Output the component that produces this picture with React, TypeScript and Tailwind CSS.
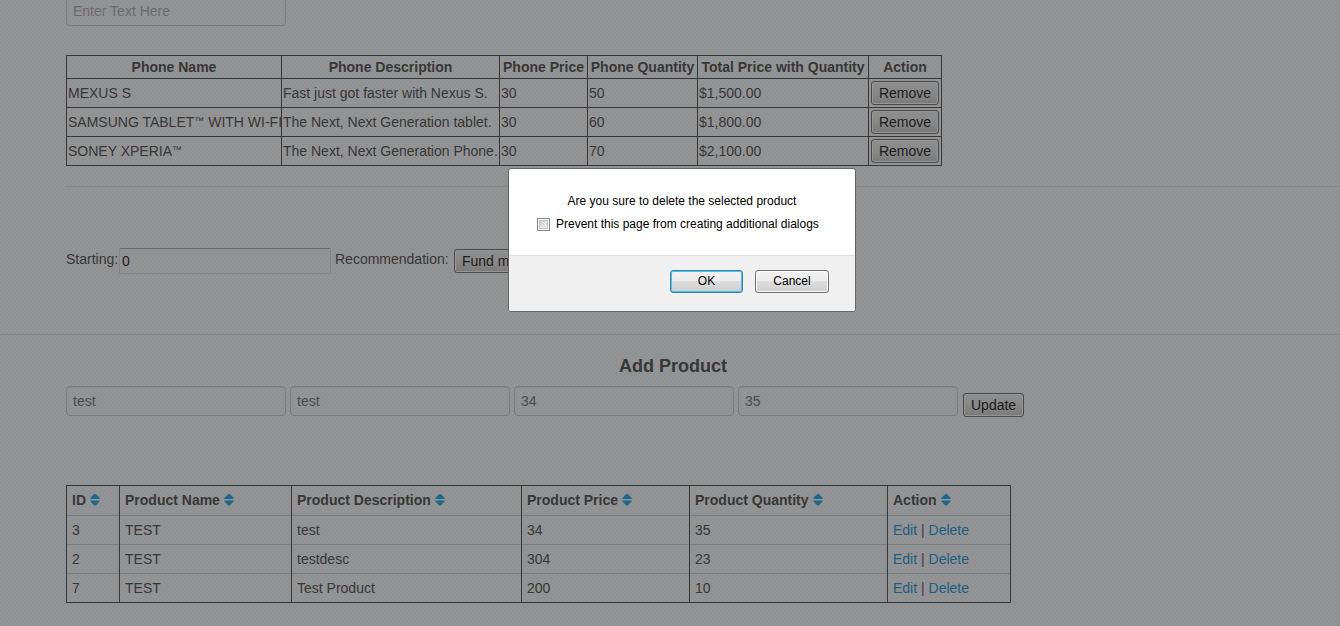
import { ReactNode } from "react";

const phones = [
  { name: "MEXUS S", description: "Fast just got faster with Nexus S.", price: 30, quantity: 50, total: "$1,500.00" },
  { name: "SAMSUNG TABLET™ WITH WI-FI", description: "The Next, Next Generation tablet.", price: 30, quantity: 60, total: "$1,800.00" },
  { name: "SONEY XPERIA™", description: "The Next, Next Generation Phone.", price: 30, quantity: 70, total: "$2,100.00" },
];

const products = [
  { id: 3, name: "TEST", description: "test", price: 34, quantity: 35 },
  { id: 2, name: "TEST", description: "testdesc", price: 304, quantity: 23 },
  { id: 7, name: "TEST", description: "Test Product", price: 200, quantity: 10 },
];

const phoneColumns = [
  { label: "Phone Name", width: "w-[215px]" },
  { label: "Phone Description", width: "w-[218px]" },
  { label: "Phone Price", width: "w-[88px]" },
  { label: "Phone Quantity", width: "w-[110px]" },
  { label: "Total Price with Quantity", width: "w-[171px]" },
  { label: "Action", width: "w-[73px]" },
];

const productColumns = [
  { label: "ID", width: "w-[53px]" },
  { label: "Product Name", width: "w-[172px]" },
  { label: "Product Description", width: "w-[230px]" },
  { label: "Product Price", width: "w-[168px]" },
  { label: "Product Quantity", width: "w-[198px]" },
  { label: "Action", width: "w-[123px]" },
];

function SortIcon() {
  return (
    <svg viewBox="0 0 10 12" className="ml-1 inline-block h-3 w-[10px] align-[-1px] fill-[#1d688c]" aria-hidden="true">
      <path d="M4.2 0h1.6L9.6 4v1H0.4V4Z M0.4 6.5h9.2v1L5.8 11.5H4.2L0.4 7.5Z" />
    </svg>
  );
}

function PhoneName({ name }: { name: string }) {
  const [before, after] = name.split("™");
  if (after === undefined) return <>{name}</>;
  return (
    <>
      {before}
      <span className="align-[3px] text-[10px] leading-none">™</span>
      {after}
    </>
  );
}

function PageButton({ children }: { children: ReactNode }) {
  return (
    <button
      type="button"
      className="h-6 rounded-[3px] border border-[#4a4a4a] bg-linear-to-b from-[#8e8e8e] via-[#888888] to-[#7a7a7a] px-[7px] text-sm leading-5 whitespace-nowrap text-[#1c1c1c] shadow-[inset_0_0_0_1px_#959595]"
    >
      {children}
    </button>
  );
}

const fieldClass =
  "h-[30px] w-[220px] rounded border border-[#7a7b7c] bg-transparent px-[6px] text-sm text-[#4a4b4b] placeholder:text-[#6a6b6b] shadow-[inset_0_1px_1px_rgba(0,0,0,0.05)]";

export default function App() {
  return (
    <div className="relative min-h-screen overflow-hidden bg-[#929393] bg-[repeating-conic-gradient(#8f9192_0_25%,#949494_0_50%)] bg-size-[4px_4px] font-['Liberation_Sans',Arial,sans-serif] text-sm leading-5 text-[#373737]">
      <div className="-mt-1 pl-[66px]">
        <input aria-label="Search phones" placeholder="Enter Text Here" className={`${fieldClass} block`} />
        <table className="mt-[29px] w-[876px] table-fixed border-collapse border border-[#373737]">
          <thead>
            <tr className="h-[23px]">
              {phoneColumns.map((column) => (
                <th key={column.label} className={`${column.width} border border-[#373737] p-px text-center font-bold whitespace-nowrap`}>
                  {column.label}
                </th>
              ))}
            </tr>
          </thead>
          <tbody>
            {phones.map((phone) => (
              <tr key={phone.name} className="h-[29px]">
                <td className="border border-[#373737] p-px whitespace-nowrap">
                  <PhoneName name={phone.name} />
                </td>
                <td className="border border-[#373737] p-px whitespace-nowrap">{phone.description}</td>
                <td className="border border-[#373737] p-px">{phone.price}</td>
                <td className="border border-[#373737] p-px">{phone.quantity}</td>
                <td className="border border-[#373737] p-px">{phone.total}</td>
                <td className="border border-[#373737] p-px">
                  <div className="flex justify-center">
                    <PageButton>Remove</PageButton>
                  </div>
                </td>
              </tr>
            ))}
          </tbody>
        </table>
        <hr className="mt-5 border-t border-[#878787]" />
        <div className="mt-[61px] flex items-start">
          <label htmlFor="starting" className="mt-px w-[53px]">Starting:</label>
          <input
            id="starting"
            defaultValue="0"
            className="h-[26px] w-[212px] rounded-[2px] border border-[#828384] border-t-[#696a6a] bg-transparent px-[2px] text-sm text-[#1c1c1c]"
          />
          <span className="mt-px ml-1 w-[119px]">Recommendation:</span>
          <div className="mt-px">
            <PageButton>Fund my purchase</PageButton>
          </div>
        </div>
      </div>

      <hr className="mt-[60px] border-t border-[#838383]" />

      <section className="pr-[60px] pl-[66px]">
        <h2 className="mt-[19px] text-center text-lg leading-6 font-bold">Add Product</h2>
        <form className="mt-2 flex items-start gap-1">
          <input aria-label="Product name" defaultValue="test" className={fieldClass} />
          <input aria-label="Product description" defaultValue="test" className={fieldClass} />
          <input aria-label="Product price" defaultValue="34" className={fieldClass} />
          <input aria-label="Product quantity" defaultValue="35" className={fieldClass} />
          <div className="mt-[7px] ml-px">
            <PageButton>Update</PageButton>
          </div>
        </form>
        <table className="mt-[68px] w-[945px] table-fixed border-collapse border border-[#373737]">
          <thead>
            <tr className="h-[30px]">
              {productColumns.map((column) => (
                <th key={column.label} className={`${column.width} border-x border-[#373737] px-[5px] pb-[2px] text-left font-bold whitespace-nowrap`}>
                  {column.label}
                  <SortIcon />
                </th>
              ))}
            </tr>
          </thead>
          <tbody>
            {products.map((product) => (
              <tr key={product.id} className="h-[29px] border-t border-[#7c7d7e]">
                <td className="border-x border-x-[#373737] px-[5px]">{product.id}</td>
                <td className="border-x border-x-[#373737] px-[5px]">{product.name}</td>
                <td className="border-x border-x-[#373737] px-[5px]">{product.description}</td>
                <td className="border-x border-x-[#373737] px-[5px]">{product.price}</td>
                <td className="border-x border-x-[#373737] px-[5px]">{product.quantity}</td>
                <td className="border-x border-x-[#373737] px-[5px] text-[#4b2f52]">
                  <a href="#edit" className="text-[#1d5f80]">Edit</a> | <a href="#delete" className="text-[#1d5f80]">Delete</a>
                </td>
              </tr>
            ))}
          </tbody>
        </table>
      </section>

      <div className="absolute inset-x-0 top-[168px] flex justify-center pl-6">
        <div
          role="dialog"
          aria-modal="true"
          aria-labelledby="dialog-message"
          className="w-[348px] overflow-hidden rounded-[3px] border border-[#656666] bg-white text-xs leading-4 text-black"
        >
          <div className="h-[86px] px-7 pt-6">
            <p id="dialog-message" className="text-center">Are you sure to delete the selected product</p>
            <label className="mt-[7px] flex items-center gap-[6px] whitespace-nowrap">
              <input
                type="checkbox"
                className="size-[13px] shrink-0 appearance-none border border-[#8e8f8f] bg-linear-to-br from-[#c8ccd0] to-[#f8f8f8] shadow-[inset_0_0_0_1px_#f4f4f4,inset_0_0_0_2px_#c4c6c8]"
              />
              Prevent this page from creating additional dialogs
            </label>
          </div>
          <div className="flex h-14 items-start justify-end gap-3 border-t border-[#dfdfdf] bg-[#f0f0f0] pt-[14px] pr-[26px]">
            <button
              type="button"
              className="h-[23px] w-[73px] rounded-[3px] border border-[#3c7fb1] bg-[linear-gradient(#f2f2f2,#ebebeb_50%,#dddddd_50%,#cfcfcf)] pb-[2px] shadow-[inset_0_0_0_1px_#48c4ea]"
            >
              OK
            </button>
            <button
              type="button"
              className="h-[23px] w-[74px] rounded-[3px] border border-[#707070] bg-[linear-gradient(#f2f2f2,#ebebeb_50%,#dddddd_50%,#cfcfcf)] pb-[2px] shadow-[inset_0_0_0_1px_#fafafa]"
            >
              Cancel
            </button>
          </div>
        </div>
      </div>
    </div>
  );
}
